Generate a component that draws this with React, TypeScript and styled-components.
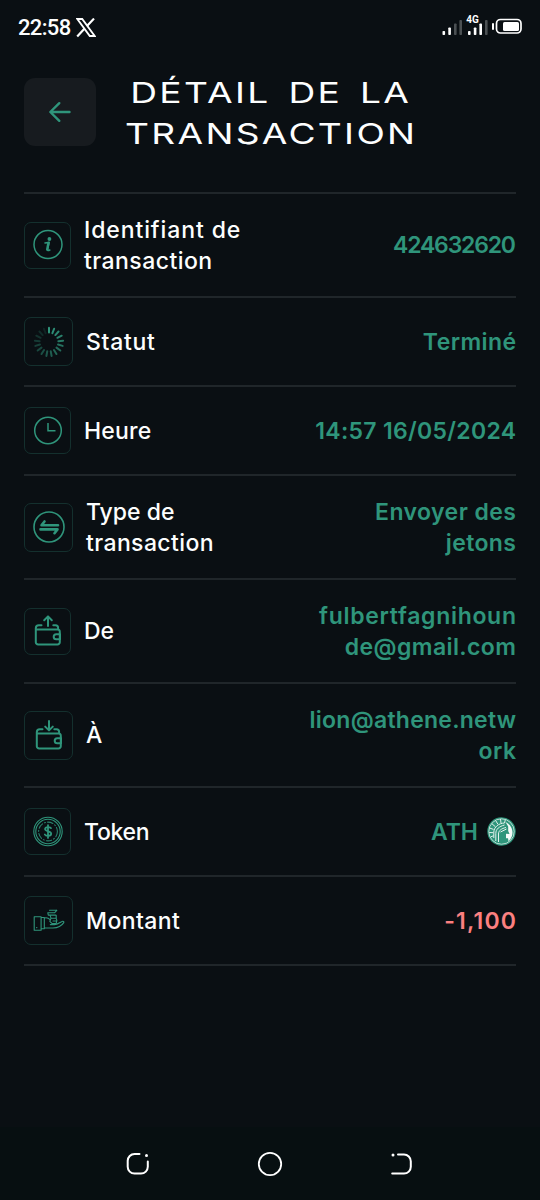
import React from 'react';
import styled, { createGlobalStyle } from 'styled-components';

const GREEN = '#2f957b';

const GlobalStyle = createGlobalStyle`
  *, *::before, *::after { box-sizing: border-box; }
  body { margin: 0; background: #0a0f13; }
`;

const Screen = styled.div`
  display: flex;
  flex-direction: column;
  width: 540px;
  height: 1200px;
  background: #0a0f13;
  color: #fdfefe;
  font-family: Inter, 'Liberation Sans', sans-serif;
  overflow: hidden;
`;

const StatusBar = styled.header`
  display: flex;
  align-items: center;
  height: 56px;
  padding: 0 18px;
`;

const Clock = styled.span`
  font: 500 22px/56px Roboto, sans-serif;
  letter-spacing: -0.65px;
  margin-right: 5.5px;
`;

const Spacer = styled.div`
  flex: 1;
`;

const TopBar = styled.div`
  display: grid;
  grid-template-columns: 72px 1fr 72px;
  grid-template-rows: 68px;
  align-items: center;
  height: 68px;
  margin: 22px 24px 46px;
`;

const BackButton = styled.button`
  display: flex;
  align-items: center;
  justify-content: center;
  width: 72px;
  height: 68px;
  padding: 0;
  border: 0;
  border-radius: 11px;
  background: #171b1f;
`;

const Title = styled.h1`
  display: flex;
  flex-direction: column;
  align-items: center;
  margin: 0;
  padding-top: 2px;
  font-weight: 400;
  font-size: 29px;
  line-height: 41px;
  white-space: nowrap;
`;

const TitleLine = styled.span<{ $spacing: number; $words?: number }>`
  letter-spacing: ${(p) => p.$spacing}px;
  word-spacing: ${(p) => p.$words ?? 0}px;
  margin-right: -${(p) => p.$spacing}px;
  transform: scaleX(1.28);
`;

const List = styled.ul`
  list-style: none;
  margin: 0 24px;
  padding: 0;
  border-top: 2px solid #20262a;
`;

const Row = styled.li<{ $tall?: boolean }>`
  display: flex;
  align-items: center;
  height: ${(p) => (p.$tall ? 104 : 89)}px;
  border-bottom: 2px solid #20262a;
`;

const IconBox = styled.div<{ $large?: boolean }>`
  display: flex;
  align-items: center;
  justify-content: center;
  flex: none;
  width: ${(p) => (p.$large ? 49 : 47)}px;
  height: ${(p) => (p.$large ? 49 : 47)}px;
  margin-right: 13px;
  border: 1px solid #14302e;
  border-radius: 7px;
`;

const Label = styled.div`
  display: flex;
  flex-direction: column;
  flex: 1;
  padding-top: 2px;
  font-size: 23px;
  font-weight: 450;
  line-height: 31.5px;
  white-space: nowrap;
`;

const Value = styled.div<{ $negative?: boolean }>`
  display: flex;
  flex-direction: column;
  align-items: flex-end;
  padding-top: 2px;
  font-size: 23px;
  font-weight: 600;
  line-height: 31.5px;
  white-space: nowrap;
  color: ${(p) => (p.$negative ? '#fb8080' : GREEN)};
`;

const Line = styled.span<{ $spacing: number }>`
  letter-spacing: ${(p) => p.$spacing}px;
  margin-right: ${(p) => -p.$spacing}px;
`;

const TokenValue = styled.div`
  display: flex;
  align-items: center;
  gap: 9px;

  svg {
    margin-bottom: 3px;
  }
`;

const NavBar = styled.nav`
  display: flex;
  align-items: center;
  justify-content: space-between;
  height: 73px;
  margin-top: auto;
  padding: 0 125px;
  background: #070f11;
`;

const Stroke = ({ size, w = 1.5, children }: { size: number; w?: number; children: React.ReactNode }) => (
  <svg width={size} height={size} viewBox={`0 0 ${size} ${size}`} fill="none" stroke={GREEN} strokeWidth={w}
    strokeLinecap="round" strokeLinejoin="round">{children}</svg>
);

const InfoIcon = () => (
  <Stroke size={32}>
    <circle cx="16" cy="15.5" r="14" />
    <circle cx="17.400" cy="10" r="1.900" fill={GREEN} stroke="none" />
    <path d="M13 14l4.200-.6-1.700 7.200q-.3 1.600 2.300.5" strokeWidth="1.600" />
    <path d="M16.400 14l-1.200 6.500" strokeWidth="2.400" />
  </Stroke>
);

const SpinnerIcon = () => (
  <Stroke size={32} w={2}>
    {Array.from({ length: 17 }, (_, i) => (
      <path key={i} d="M16 1.800v4.800" transform={`rotate(${(i * 360) / 17} 16 16)`} opacity={1 - i * 0.052} />
    ))}
  </Stroke>
);

const ClockIcon = () => (
  <Stroke size={32}>
    <circle cx="16" cy="15.500" r="13.300" />
    <path d="M16 8v7.800h7.500" strokeLinecap="butt" strokeLinejoin="miter" />
  </Stroke>
);

const SwapIcon = () => (
  <Stroke size={34} w={1.600}>
    <circle cx="17" cy="17" r="15" />
    <path d="M26 15.300H9.500l3-3.800M8.500 19.400H25.500l-3 3.800" strokeWidth="2.600" />
  </Stroke>
);

const WalletIcon = ({ incoming }: { incoming?: boolean }) => (
  <Stroke size={34} w={2}>
    <path d="M4.800 15.400h21.700a2.300 2.300 0 0 1 2.300 2.300v10.500a2.300 2.300 0 0 1-2.300 2.300H7.100a2.300 2.300 0 0 1-2.300-2.300V14.200a3 3 0 0 1 3-3H10.500M22.300 11.200h2.200a2.600 2.600 0 0 1 2.600 2.600v1.600" />
    <path d="M29 20.300h-3.800a2.500 2.500 0 0 0 0 5H29z" />
    <path d={incoming ? 'M17 3v9M13.200 8.600L17 12.400l3.800-3.800' : 'M17 12V2.500M13.200 6.200L17 2.400l3.800 3.800'} />
  </Stroke>
);

const CoinIcon = () => (
  <Stroke size={32} w={1.100}>
    <circle cx="16" cy="15.500" r="14.200" />
    <circle cx="16" cy="15.500" r="12.200" />
    <circle cx="16" cy="15.500" r="9.400" strokeDasharray="5.500 2.200 1 2.200" opacity=".85" />
    <path d="M19 12.100c-.6-1.300-5.800-1.700-5.900 1 0 2.900 6.100 1.700 6.100 4.700 0 2.700-5.600 2.500-6.400.7M16 9.100v12.800" strokeWidth="1.800" />
  </Stroke>
);

const HandIcon = () => (
  <Stroke size={34} w={1.1}>
    <path d="M2.200 12.700h6.900v13.500H2.200zM9.100 13.500h3.200v11.200H9.100M4.600 23.600h.3" />
    <path d="M12.500 14c2.600-.8 4.300.4 5.600 1.700M12.500 24h8.500c5-.2 9-2.700 10.800-5.400.5-1.200-.7-1.700-2-1-2.200 1.300-4.600 2.900-7.200 3h-4.300" />
    <path d="M17.500 6.200h7.200M15.800 8.800h6.700l2.300-2.400M15.800 8.800l.5 2.300h7.400M18 11.200l1 3h5.200v-3M19 14.200l-1.200 3.200 2.300 2.200h4l.8-3.200-.8-2.200M21 17h3.200" />
  </Stroke>
);

const AthLogo = () => (
  <svg width="29" height="29" viewBox="0 0 29 29" fill="none">
    <circle cx="14.500" cy="14.500" r="14.200" fill={GREEN} />
    <path d="M18.500 5a11.500 11.500 0 0 1 3 19.300l-.5-3h-2v-4.500l3.500.3-1.300-3V9.500z" fill="#f4faf8" />
    <circle cx="14.500" cy="14.500" r="12.700" stroke="#d7eae5" strokeWidth=".8" />
    <path d="M8.800 24V16.500c0-4.600 3.500-7 8.700-8.500M11.500 25v-8c0-3.500 3-5.500 7.500-6.500M6.800 21V15c.2-5 5-8.800 10.700-9M13.500 15l6-3" stroke="#e4f2ee" strokeWidth="1" />
    <path d="M2.500 11l4 1.400M4.800 6.600l3.400 3M8.700 3.600l2.200 3.600M13.500 2l.5 4M18.300 2.800L17.500 6M2.200 15.500l4 .2M3.500 20l3-1.300" stroke="#e4f2ee" strokeWidth="1" />
  </svg>
);

const XLogo = () => (
  <svg width="20" height="21" viewBox="0 0 20 21" fill="none" stroke="#fff">
    <path d="M1.300 1h4.900l12.500 17h-4.900z" strokeWidth="1.900" />
    <path d="M18 .6l-7 7.300M8.400 10.800L1.200 18.400" strokeWidth="2.200" />
  </svg>
);

const SignalIcons = () => (
  <svg width="80" height="32" viewBox="0 0 80 32">
    <g fill="#fff">
      <rect x="0.500" y="19" width="2.600" height="4" rx=".8" />
      <rect x="6.300" y="15.500" width="2.600" height="7.500" rx=".8" />
      <rect x="26" y="19" width="2.600" height="4" rx=".8" />
      <rect x="31.800" y="15.500" width="2.600" height="7.500" rx=".8" />
      <rect x="37.400" y="11.500" width="2.600" height="11.500" rx=".8" />
      <rect x="50" y="11" width="2" height="7" rx="1" />
      <rect x="61" y="10" width="16" height="9" rx="1.500" />
    </g>
    <g fill="#4b5053">
      <rect x="12" y="11.500" width="2.600" height="11.500" rx=".8" />
      <rect x="17.400" y="8" width="2.600" height="15" rx=".8" />
      <rect x="43" y="8" width="2.600" height="15" rx=".8" />
    </g>
    <rect x="54.500" y="7.500" width="24.500" height="13.500" rx="4" fill="none" stroke="#fff" strokeWidth="1.700" />
    <text x="24.300" y="11" fill="#fff" fontFamily="Roboto, sans-serif" fontWeight="700" fontSize="10">4G</text>
  </svg>
);

type Text = [string, number];
interface Item {
  icon: React.ReactNode;
  label: Text[];
  value: Text[];
  token?: boolean;
  negative?: boolean;
}

const items: Item[] = [
  { icon: <InfoIcon />, label: [['Identifiant de', 0.9], ['transaction', 0.45]], value: [['424632620', -1.2]] },
  { icon: <SpinnerIcon />, label: [['Statut', 0.7]], value: [['Terminé', 0.4]] },
  { icon: <ClockIcon />, label: [['Heure', 0.2]], value: [['14:57 16/05/2024', 0.3]] },
  { icon: <SwapIcon />, label: [['Type de', 0]  , ['transaction', 0.4]], value: [['Envoyer des', 0.45], ['jetons', 0.4]] },
  { icon: <WalletIcon />, label: [['De', 0]], value: [['fulbertfagnihoun', 0.7], ['de@gmail.com', 0.4]] },
  { icon: <WalletIcon incoming />, label: [['À', 0]], value: [['lion@athene.netw', 0.25], ['ork', 0.5]] },
  { icon: <CoinIcon />, label: [['Token', -0.3]], value: [['ATH', 0]], token: true },
  { icon: <HandIcon />, label: [['Montant', 0.4]], value: [['-1,100', 1.2]], negative: true },
];

const Lines = ({ lines }: { lines: Text[] }) => (
  <>{lines.map(([text, spacing]) => <Line key={text} $spacing={spacing}>{text}</Line>)}</>
);

export default function App() {
  return (
    <Screen>
      <GlobalStyle />
      <StatusBar>
        <Clock>22:58</Clock>
        <XLogo />
        <Spacer />
        <SignalIcons />
      </StatusBar>
      <TopBar>
        <BackButton aria-label="Retour">
          <svg width="24" height="22" viewBox="0 0 24 22" fill="none" stroke={GREEN} strokeWidth="2.400" strokeLinecap="round" strokeLinejoin="round">
            <path d="M21.500 11H2.500M11.300 2.200L2.300 11l9 8.800" />
          </svg>
        </BackButton>
        <Title>
          <TitleLine $spacing={1.8} $words={4}>DÉTAIL DE LA</TitleLine>
          <TitleLine $spacing={1.8}>TRANSACTION</TitleLine>
        </Title>
      </TopBar>
      <List>
        {items.map((item, i) => (
          <Row key={i} $tall={item.label.length > 1 || item.value.length > 1}>
            <IconBox $large={i % 2 === 1}>{item.icon}</IconBox>
            <Label><Lines lines={item.label} /></Label>
            <Value $negative={item.negative}>
              {item.token ? <TokenValue><Lines lines={item.value} /><AthLogo /></TokenValue> : <Lines lines={item.value} />}
            </Value>
          </Row>
        ))}
      </List>
      <NavBar>
        <svg width="26" height="26" viewBox="0 0 26 26" fill="none" stroke="#fff" strokeWidth="2" strokeLinecap="round">
          <path d="M14.500 3H9.500a6.800 6.800 0 0 0-6.800 6.800v6a6.800 6.800 0 0 0 6.800 6.800h6.500a6.800 6.800 0 0 0 6.800-6.800v-5.300" />
          <circle cx="21.500" cy="4.600" r="1.500" fill="#fff" stroke="none" />
        </svg>
        <svg width="26" height="26" viewBox="0 0 26 26" fill="none" stroke="#fff" strokeWidth="1.800">
          <circle cx="13" cy="13" r="11.200" />
        </svg>
        <svg width="26" height="26" viewBox="0 0 26 26" fill="none" stroke="#fff" strokeWidth="2" strokeLinecap="round">
          <path d="M9 3.500h6a6.800 6.800 0 0 1 6.800 6.800v5.500a6.800 6.800 0 0 1-6.800 6.800H3.200" />
          <circle cx="4" cy="4" r="1.500" fill="#fff" stroke="none" />
        </svg>
      </NavBar>
    </Screen>
  );
}
